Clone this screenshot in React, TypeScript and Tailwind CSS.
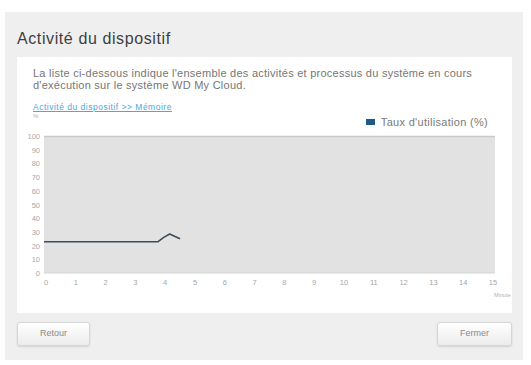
import React from "react";

// Points of the usage curve: [minute, percent]
const usage: [number, number][] = [
  [0, 22.8],
  [3.75, 22.8],
  [3.95, 26],
  [4.15, 28.5],
  [4.35, 26.5],
  [4.5, 25],
];

const plotLeft = 27;
const plotRight = 478;
const plotTop = 7;
const plotBottom = 144;
const tick0 = 29;
const tickStep = 29.8;

function px(min: number) {
  return tick0 + min * tickStep;
}
function py(pct: number) {
  return plotBottom - (pct / 100) * (plotBottom - plotTop);
}

function UsageChart() {
  const line = usage.map(([m, v]) => `${px(m).toFixed(1)},${py(v).toFixed(1)}`).join(" ");
  const yTicks = [100, 90, 80, 70, 60, 50, 40, 30, 20, 10, 0];
  const xTicks = Array.from({ length: 16 }, (_, i) => i);

  return (
    <svg width="495" height="178" viewBox="0 0 495 178" className="block" style={{ fontFamily: "'Liberation Sans', Arial, sans-serif" }}>
      <rect x={plotLeft} y={plotTop} width={plotRight - plotLeft} height={plotBottom - plotTop} fill="#e2e2e2" />
      <line x1={plotLeft} y1={plotTop + 0.5} x2={plotRight} y2={plotTop + 0.5} stroke="#c9c9c9" strokeWidth="1.5" />
      <line x1={plotLeft} y1={plotBottom} x2={plotRight} y2={plotBottom} stroke="#d4d4d4" strokeWidth="1" />
      <polyline points={`${plotLeft},${py(usage[0][1]).toFixed(1)} ${line}`} fill="none" stroke="#3c4e5e" strokeWidth="1.6" strokeLinejoin="round" />
      {yTicks.map((v) => (
        <text key={v} x={23} y={py(v) + 3} fontSize="7.5" fill="#a8a8a8" textAnchor="end">
          {v}
        </text>
      ))}
      {xTicks.map((m) => (
        <text key={m} x={px(m)} y={156} fontSize="7.5" fill="#a8a8a8" textAnchor="middle">
          {m}
        </text>
      ))}
      <text x={477} y={168} fontSize="5.5" fill="#b0b0b0">
        Minute
      </text>
    </svg>
  );
}

export default function App() {
  return (
    <div
      className="w-[531px] h-[365px] bg-white pl-[5px] pr-[8px] pt-[12px] pb-[5px]"
      style={{ fontFamily: "'Liberation Sans', Arial, sans-serif" }}
    >
      <div className="h-[348px] bg-[#efefef] pl-[12px] pr-[11px] pt-[18px]">
        <h1 className="text-[16px] leading-[18px] text-[#404040] tracking-[0.6px]">Activité du dispositif</h1>

        <div className="mt-[9px] h-[256px] bg-white">
          <div className="pl-[16px] pr-[10px] pt-[10px]">
            <p className="text-[11px] leading-[12px] tracking-[0.25px] text-[#767676]">
              La liste ci-dessous indique l'ensemble des activités et processus du système en cours
              <br />
              d'exécution sur le système WD My Cloud.
            </p>
            <a className="mt-[12px] block w-fit text-[8.5px] leading-[9px] tracking-[0.5px] text-[#4aa8e0] underline">
              Activité du dispositif &gt;&gt; Mémoire
            </a>
            <div className="flex h-[17px] items-start justify-between pr-[14px]">
              <span className="text-[6px] leading-[8px] text-[#b0b0b0]">%</span>
              <div className="flex items-center gap-[6px] pt-[4px]">
                <span className="h-[6px] w-[9px] bg-[#1d5a8c]" />
                <span className="text-[11px] leading-[12px] tracking-[0.3px] text-[#7a7a7a]">Taux d'utilisation (%)</span>
              </div>
            </div>
          </div>
          <UsageChart />
        </div>

        <div className="mt-[9px] flex justify-between">
          <button className="h-[24px] w-[73px] rounded-[3px] border border-[#d6d6d6] bg-gradient-to-b from-white to-[#ececec] text-[9px] text-[#8a8a8a] shadow-[0_1px_2px_rgba(0,0,0,0.12)]">
            Retour
          </button>
          <button className="h-[24px] w-[75px] rounded-[3px] border border-[#d6d6d6] bg-gradient-to-b from-white to-[#ececec] text-[9px] text-[#8a8a8a] shadow-[0_1px_2px_rgba(0,0,0,0.12)]">
            Fermer
          </button>
        </div>
      </div>
    </div>
  );
}
